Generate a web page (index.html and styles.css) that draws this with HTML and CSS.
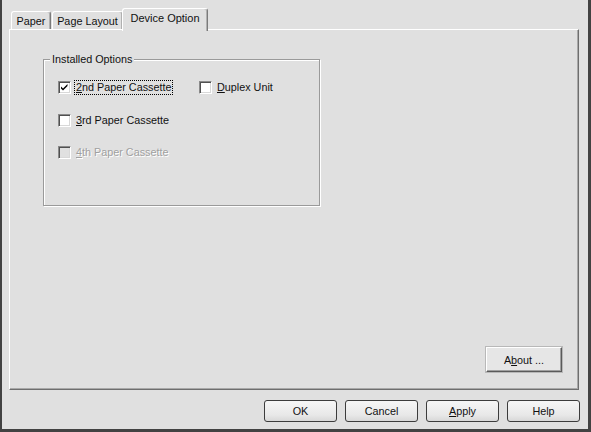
FILE: index.html
```html
<!DOCTYPE html>
<html>
<head>
<meta charset="utf-8">
<link rel="stylesheet" href="styles.css">
</head>
<body>
<div class="dialog">
  <div class="tabs">
    <div class="tab tab-paper">Paper</div>
    <div class="tab tab-layout">Page Layout</div>
    <div class="tab tab-active">Device Option</div>
  </div>
  <div class="panel">
    <div class="group">
      <div class="group-label">Installed Options</div>
      <div class="options">
        <div class="opt">
          <span class="cb"><svg width="11" height="11" viewBox="0 0 11 11"><path d="M2 4.5 L4 6.5 L8.5 2 L8.5 4 L4 8.5 L2 6.5 Z" fill="#000"/></svg></span>
          <span class="txt focus"><u>2</u>nd Paper Cassette</span>
        </div>
        <div class="opt">
          <span class="cb"></span>
          <span class="txt"><u>D</u>uplex Unit</span>
        </div>
        <div class="opt">
          <span class="cb"></span>
          <span class="txt"><u>3</u>rd Paper Cassette</span>
        </div>
        <div class="opt"></div>
        <div class="opt disabled">
          <span class="cb"></span>
          <span class="txt"><u>4</u>th Paper Cassette</span>
        </div>
      </div>
    </div>
    <div class="about-row">
      <button class="btn-about">A<u>b</u>out ...</button>
    </div>
  </div>
  <div class="buttons">
    <button class="btn">OK</button>
    <button class="btn">Cancel</button>
    <button class="btn"><u>A</u>pply</button>
    <button class="btn">Help</button>
  </div>
</div>
</body>
</html>
```
FILE: styles.css
```css
html, body {
  margin: 0;
  padding: 0;
  background: #e0e0e0;
}
body {
  font-family: "Liberation Sans", Arial, sans-serif;
  font-size: 10.8px;
  color: #111;
}
.dialog {
  width: 591px;
  height: 432px;
  box-sizing: border-box;
  border-left: 2px solid #424242;
  border-right: 3px solid #424242;
  border-bottom: 3px solid #424242;
  padding: 8px 8px 7px 7px;
  display: flex;
  flex-direction: column;
  background: #e0e0e0;
}
.tabs {
  height: 21px;
  display: flex;
  align-items: flex-end;
  padding-left: 2px;
}
.tab {
  box-sizing: border-box;
  height: 18px;
  border-top: 1px solid #fff;
  border-left: 1px solid #fff;
  border-right: 1px solid #7a7a7a;
  border-radius: 3px 3px 0 0;
  box-shadow: inset -1px 0 0 #b0b0b0;
  padding: 3px 0 0;
  text-align: center;
  line-height: 13px;
  background: #e0e0e0;
}
.tab-paper { width: 40px; }
.tab-layout { width: 71px; margin-left: 1px; }
.tab-active {
  width: 86px;
  height: 23px;
  margin-left: -1px;
  margin-bottom: -2px;
  padding-top: 3px;
  position: relative;
  z-index: 2;
  font-size: 11px;
}
.panel {
  height: 361px;
  box-sizing: border-box;
  margin-right: 1px;
  border-top: 1px solid #fff;
  border-left: 1px solid #fff;
  border-right: 1px solid #6e6e6e;
  border-bottom: 1px solid #6e6e6e;
  box-shadow: inset -1px -1px 0 #a8a8a8;
  display: flex;
  flex-direction: column;
  padding: 29px 16px 17px 33px;
}
.group {
  position: relative;
  width: 277px;
  height: 147px;
  box-sizing: border-box;
  border: 1px solid #9a9a9a;
  box-shadow: inset 1px 1px 0 #fff, 1px 1px 0 #fff;
  padding: 21px 0 0 14px;
}
.group-label {
  position: absolute;
  top: -7px;
  left: 6px;
  padding: 0 2px;
  background: #e0e0e0;
  line-height: 13px;
}
.options {
  display: grid;
  grid-template-columns: 141px 110px;
  grid-auto-rows: 13px;
  row-gap: 19.5px;
}
.opt {
  display: flex;
  align-items: center;
  height: 13px;
}
.cb {
  box-sizing: border-box;
  width: 13px;
  height: 13px;
  border-top: 1px solid #8a8a8a;
  border-left: 1px solid #8a8a8a;
  border-right: 1px solid #fff;
  border-bottom: 1px solid #fff;
  box-shadow: inset 1px 1px 0 #505050, inset -1px -1px 0 #d8d8d8;
  background: #fff;
  display: flex;
  align-items: center;
  justify-content: center;
  flex: none;
}
.cb svg { display: block; }
.txt {
  line-height: 13px;
  white-space: nowrap;
  padding: 0 1px;
  border: 1px dotted transparent;
  margin-left: 3px;
}
.txt.focus {
  border-color: #000;
}
.disabled .cb {
  background: #e0e0e0;
}
.disabled .txt {
  color: #a0a0a0;
  text-shadow: 1px 1px 0 #fff;
}
.about-row {
  margin-top: auto;
  display: flex;
  justify-content: flex-end;
}
.btn-about {
  width: 76px;
  height: 25px;
  box-sizing: border-box;
  font: inherit;
  color: #111;
  background: #e6e6e6;
  border-top: 1px solid #fff;
  border-left: 1px solid #fff;
  border-right: 1px solid #5a5a5a;
  border-bottom: 1px solid #5a5a5a;
  box-shadow: inset -1px -1px 0 #a0a0a0, 0 0 0 1px #b8b8b8;
  padding: 0;
}
.buttons {
  margin-top: 10px;
  display: flex;
  justify-content: flex-end;
  gap: 8px;
}
.btn {
  width: 73px;
  height: 22px;
  box-sizing: border-box;
  font: inherit;
  color: #111;
  border: 1px solid #3c3c3c;
  border-radius: 3px;
  background: linear-gradient(#f6f6f6, #e8e8e8 70%, #d8d8d8);
  padding: 0;
}
u { text-decoration: underline; text-underline-offset: 1px; }
```
